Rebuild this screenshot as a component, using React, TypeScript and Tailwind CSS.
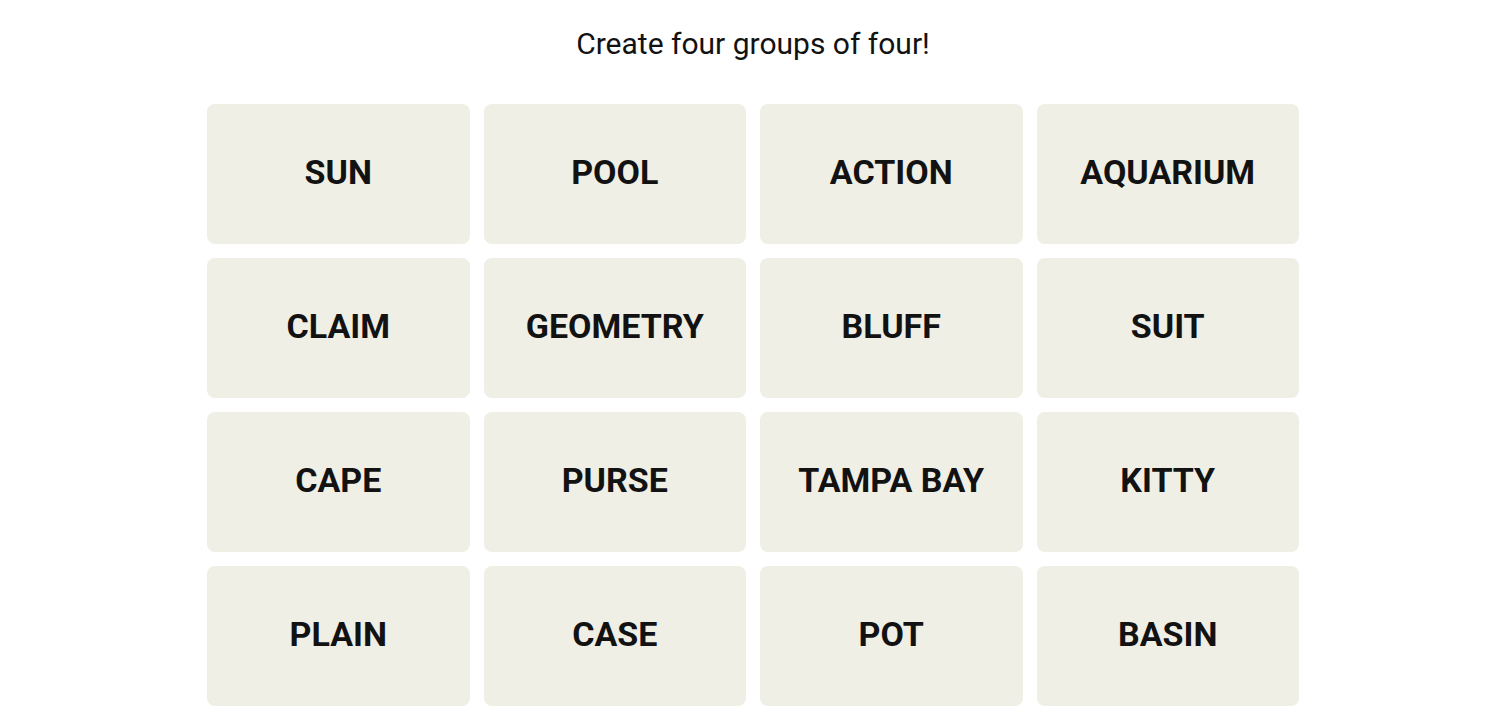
const words = [
  'SUN', 'POOL', 'ACTION', 'AQUARIUM',
  'CLAIM', 'GEOMETRY', 'BLUFF', 'SUIT',
  'CAPE', 'PURSE', 'TAMPA BAY', 'KITTY',
  'PLAIN', 'CASE', 'POT', 'BASIN',
]

export default function App() {
  return (
    <div className="min-h-screen bg-white font-['Roboto',sans-serif] text-[#121212]">
      <div className="flex flex-col items-center pl-[6px]">
        <h1 className="pt-[26px] text-[30px] leading-[36px] font-normal">
          Create four groups of four!
        </h1>
        <div className="mt-[42px] grid w-[1092px] grid-cols-4 gap-[14px]">
          {words.map((w) => (
            <button
              key={w}
              className="flex h-[140px] items-center justify-center rounded-[8px] bg-[#efefe6] pb-[4px] text-[34px] font-bold uppercase"
            >
              {w}
            </button>
          ))}
        </div>
      </div>
    </div>
  )
}
